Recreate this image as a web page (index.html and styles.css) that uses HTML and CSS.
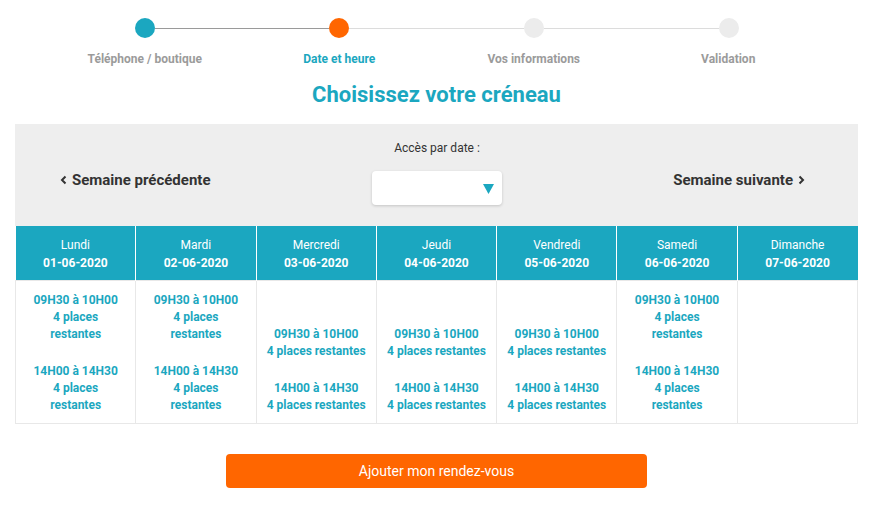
FILE: index.html
```html
<!DOCTYPE html>
<html lang="fr">
<head>
<meta charset="utf-8">
<title>Choisissez votre créneau</title>
<link rel="stylesheet" href="styles.css">
</head>
<body>
<div class="page">
  <div class="steps">
    <div class="steps-track">
      <span class="dot dot--done"></span><span class="line line--done"></span>
      <span class="dot dot--active"></span><span class="line"></span>
      <span class="dot"></span><span class="line"></span>
      <span class="dot"></span>
    </div>
    <div class="steps-labels">
      <span class="step-label">Téléphone / boutique</span>
      <span class="step-label step-label--current">Date et heure</span>
      <span class="step-label">Vos informations</span>
      <span class="step-label">Validation</span>
    </div>
  </div>

  <h1 class="title">Choisissez votre créneau</h1>

  <div class="panel">
    <a class="nav nav--prev" href="#"><svg class="chev" width="7" height="10" viewBox="0 0 7 10"><polyline points="5.5,1.5 2,5 5.5,8.5" fill="none" stroke="#333" stroke-width="2"/></svg>Semaine précédente</a>
    <div class="picker">
      <div class="picker-label">Accès par date :</div>
      <div class="picker-select"><svg width="11" height="10" viewBox="0 0 11 10"><polygon points="0,0 11,0 5.5,10" fill="#1ba7c0"/></svg></div>
    </div>
    <a class="nav nav--next" href="#">Semaine suivante<svg class="chev" width="7" height="10" viewBox="0 0 7 10"><polyline points="1.5,1.5 5,5 1.5,8.5" fill="none" stroke="#333" stroke-width="2"/></svg></a>
  </div>

  <table class="week">
    <thead>
      <tr>
        <th><span class="day">Lundi</span><span class="date">01-06-2020</span></th>
        <th><span class="day">Mardi</span><span class="date">02-06-2020</span></th>
        <th><span class="day">Mercredi</span><span class="date">03-06-2020</span></th>
        <th><span class="day">Jeudi</span><span class="date">04-06-2020</span></th>
        <th><span class="day">Vendredi</span><span class="date">05-06-2020</span></th>
        <th><span class="day">Samedi</span><span class="date">06-06-2020</span></th>
        <th><span class="day">Dimanche</span><span class="date">07-06-2020</span></th>
      </tr>
    </thead>
    <tbody>
      <tr>
        <td>
          <a class="slot" href="#"><span>09H30 à 10H00</span><span>4 places</span><span>restantes</span></a>
          <a class="slot" href="#"><span>14H00 à 14H30</span><span>4 places</span><span>restantes</span></a>
        </td>
        <td>
          <a class="slot" href="#"><span>09H30 à 10H00</span><span>4 places</span><span>restantes</span></a>
          <a class="slot" href="#"><span>14H00 à 14H30</span><span>4 places</span><span>restantes</span></a>
        </td>
        <td>
          <a class="slot" href="#"><span>09H30 à 10H00</span><span>4 places restantes</span></a>
          <a class="slot" href="#"><span>14H00 à 14H30</span><span>4 places restantes</span></a>
        </td>
        <td>
          <a class="slot" href="#"><span>09H30 à 10H00</span><span>4 places restantes</span></a>
          <a class="slot" href="#"><span>14H00 à 14H30</span><span>4 places restantes</span></a>
        </td>
        <td>
          <a class="slot" href="#"><span>09H30 à 10H00</span><span>4 places restantes</span></a>
          <a class="slot" href="#"><span>14H00 à 14H30</span><span>4 places restantes</span></a>
        </td>
        <td>
          <a class="slot" href="#"><span>09H30 à 10H00</span><span>4 places</span><span>restantes</span></a>
          <a class="slot" href="#"><span>14H00 à 14H30</span><span>4 places</span><span>restantes</span></a>
        </td>
        <td></td>
      </tr>
    </tbody>
  </table>

  <div class="actions">
    <button class="submit" type="button">Ajouter mon rendez-vous</button>
  </div>
</div>
</body>
</html>
```

FILE: styles.css
```css
* { box-sizing: border-box; }

body {
  margin: 0;
  font-family: Roboto, "Liberation Sans", Arial, sans-serif;
  background: #fff;
  color: #333;
}

.page {
  padding: 18px 13px 0 15px;
}

/* Stepper */
.steps {
  width: 778px;
  margin: 0 auto;
}

.steps-track {
  display: flex;
  align-items: center;
  padding: 0 87px;
}

.dot {
  width: 20px;
  height: 20px;
  border-radius: 50%;
  background: #ececec;
  flex: none;
}

.dot--done { background: #1ba7c0; }
.dot--active { background: #ff6600; }

.line {
  flex: 1;
  height: 1px;
  background: #dcdcdc;
}

.line--done { background: #9a9a9a; }

.steps-labels {
  display: grid;
  grid-template-columns: repeat(4, 1fr);
  margin-top: 13px;
}

.step-label {
  text-align: center;
  font-size: 12px;
  line-height: 16px;
  font-weight: 700;
  color: #9b9b9b;
}

.step-label--current { color: #1ba7c0; }

/* Title */
.title {
  margin: 15px 0 16px;
  text-align: center;
  font-size: 22px;
  line-height: 26px;
  font-weight: 700;
  color: #1ba7c0;
}

/* Panel */
.panel {
  display: grid;
  grid-template-columns: 1fr auto 1fr;
  padding: 16px 53px 21px 45px;
  background: #eeeeee;
}

.nav {
  align-self: end;
  margin-bottom: 15px;
  display: flex;
  align-items: center;
  gap: 5px;
  font-size: 15px;
  line-height: 20px;
  font-weight: 700;
  color: #333;
  text-decoration: none;
}

.nav--prev { justify-self: start; }
.nav--next { justify-self: end; }

.chev { flex: none; }

.picker {
  display: flex;
  flex-direction: column;
  align-items: center;
  margin-left: 9px;
}

.picker-label {
  font-size: 12px;
  line-height: 16px;
  color: #333;
  margin-bottom: 15px;
}

.picker-select {
  width: 130px;
  height: 34px;
  background: #fff;
  border-radius: 4px;
  box-shadow: 0 1px 3px rgba(0, 0, 0, 0.18);
  display: flex;
  align-items: center;
  justify-content: flex-end;
  padding: 1px 8px 0 0;
}

/* Week table */
.week {
  width: 100%;
  border-collapse: collapse;
  table-layout: fixed;
}

.week th {
  background: #1ba7c0;
  color: #fff;
  padding: 10px 4px 8px;
  border-left: 1px solid #fff;
  font-size: 12px;
  line-height: 18px;
  text-align: center;
}

.week th:first-child { border-left: 0; }

.day {
  display: block;
  font-weight: 400;
}

.date {
  display: block;
  font-weight: 700;
}

.week td {
  border: 1px solid #e8e8e8;
  padding: 11px 4px 9px;
  vertical-align: bottom;
  text-align: center;
  background: #fff;
}

.slot {
  display: block;
  color: #1ba7c0;
  font-size: 12px;
  line-height: 17px;
  font-weight: 700;
  text-decoration: none;
}

.slot + .slot { margin-top: 20px; }

.slot span { display: block; }

/* Button */
.actions {
  display: flex;
  justify-content: center;
  padding-top: 30px;
}

.submit {
  width: 421px;
  height: 34px;
  border: 0;
  border-radius: 4px;
  background: #ff6600;
  color: #fff;
  font-family: Roboto, "Liberation Sans", Arial, sans-serif;
  font-size: 14px;
  cursor: pointer;
}
```
